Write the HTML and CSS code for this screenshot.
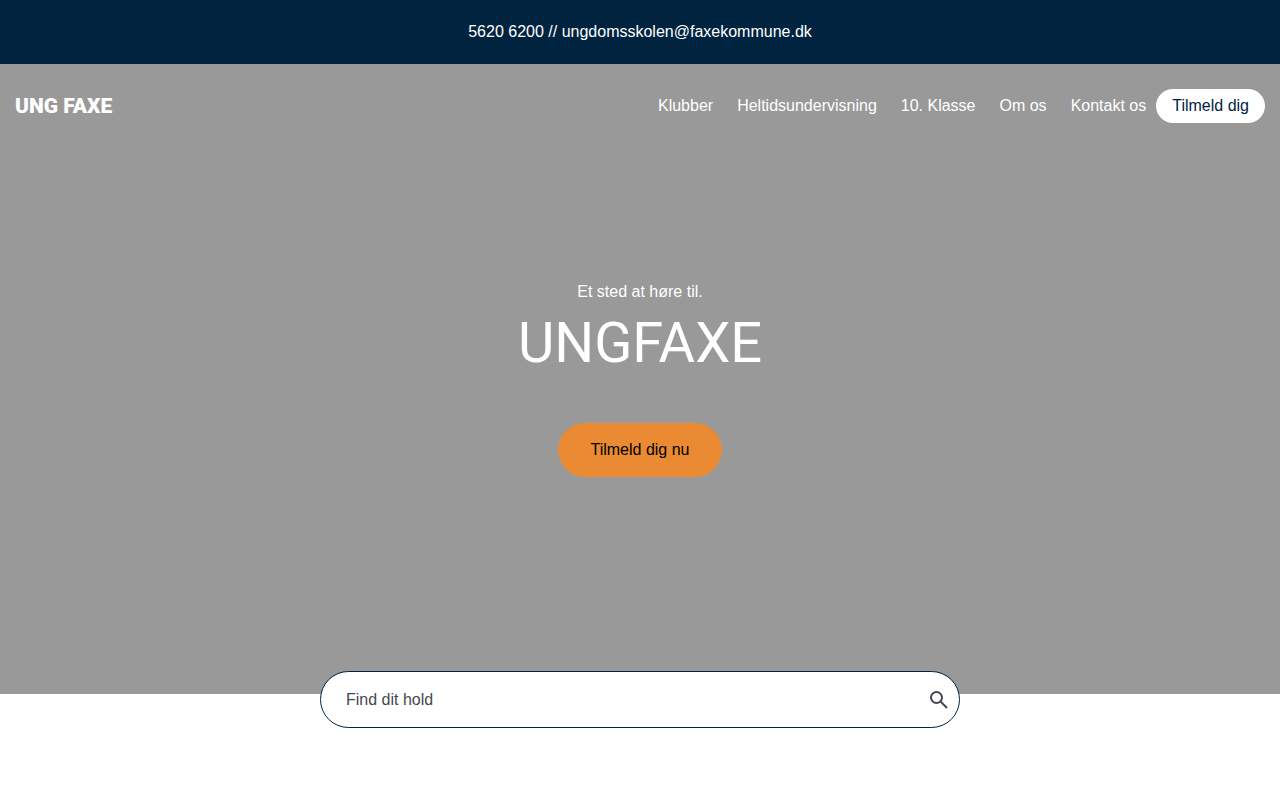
FILE: index.html
```html
<!DOCTYPE html>
<html lang="da">
<head>
<meta charset="utf-8">
<meta name="viewport" content="width=device-width, initial-scale=1">
<title>UngFaxe</title>
<link rel="stylesheet" href="styles.css">
</head>
<body>
<div class="topbar">5620 6200 // ungdomsskolen@faxekommune.dk</div>
<div class="hero">
  <header class="header">
    <a class="logo" href="#">UNG FAXE</a>
    <nav class="nav">
      <a href="#">Klubber</a>
      <a href="#">Heltidsundervisning</a>
      <a href="#">10. Klasse</a>
      <a href="#">Om os</a>
      <a href="#">Kontakt os</a>
    </nav>
    <a class="signup" href="#">Tilmeld dig</a>
  </header>
  <main class="intro">
    <p class="tagline">Et sted at høre til.</p>
    <h1 class="title">UNGFAXE</h1>
    <a class="cta" href="#">Tilmeld dig nu</a>
  </main>
</div>
<form class="search" role="search">
  <input class="search-input" type="text" aria-label="Find dit hold" placeholder="Find dit hold">
  <button class="search-button" type="submit" aria-label="Søg">
    <svg class="search-icon" viewBox="0 0 18 18" fill="none" stroke="currentColor" stroke-width="2" aria-hidden="true">
      <circle cx="6.5" cy="6.5" r="5.5"/>
      <path d="M10.5 10.5L17 17"/>
    </svg>
  </button>
</form>
</body>
</html>
```

FILE: styles.css
```css
* { box-sizing: border-box; }
body {
  margin: 0;
  background: #fff;
  color: #00233f;
  font-family: "Liberation Sans", Arial, sans-serif;
  font-size: 16px;
  line-height: 24px;
}
a { color: inherit; text-decoration: none; }
.topbar {
  padding: 20px 16px;
  background: #00233f;
  color: #fff;
  text-align: center;
}
.hero {
  display: flex;
  flex-direction: column;
  min-height: 630px;
  background: #999;
  color: #fff;
}
.header {
  display: flex;
  align-items: center;
  padding: 25px 15px;
}
.logo {
  margin-right: auto;
  font-family: Roboto, "Liberation Sans", sans-serif;
  font-size: 21px;
  font-weight: 900;
  line-height: 32px;
  white-space: nowrap;
}
.nav { display: flex; gap: 24px; margin-right: 10px; }
.signup {
  padding: 5px 16px;
  border-radius: 17px;
  background: #fff;
  color: #00233f;
}
.intro {
  display: flex;
  flex-direction: column;
  align-items: center;
  padding-top: 132px;
}
.tagline { margin: 0; }
.title {
  margin: 4px 0 45px;
  font-family: Roboto, "Liberation Sans", sans-serif;
  font-size: 56px;
  font-weight: 400;
  line-height: 70px;
}
.cta {
  padding: 15px 32px;
  border-radius: 27px;
  background: #ea8a32;
  color: #000;
}
.search {
  position: relative;
  display: flex;
  align-items: center;
  width: 50%;
  margin: -23px auto 72px;
  padding: 0 11px 0 25px;
  border: 1px solid #00233f;
  border-radius: 29px;
  background: #fff;
}
.search-input {
  flex: 1;
  min-width: 0;
  height: 55px;
  padding: 0;
  border: 0;
  outline: 0;
  background: transparent;
  color: #46464e;
  font: inherit;
}
.search-input::placeholder { color: #46464e; opacity: 1; }
.search-button {
  display: flex;
  padding: 0;
  border: 0;
  background: transparent;
  color: #46464e;
}
.search-icon { width: 18px; height: 18px; }
```
